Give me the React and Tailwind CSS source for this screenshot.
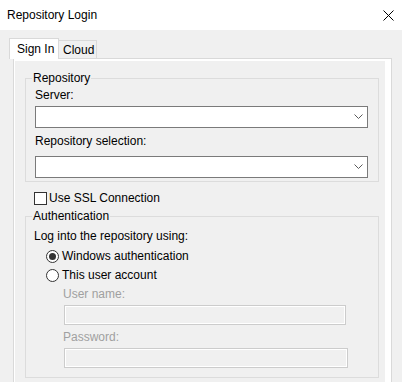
import React from "react";

// chevron of the combo boxes
function Chevron() {
  return (
    <svg width="9" height="6" viewBox="0 0 9 6" className="block">
      <path d="M0.5 0.5 L4.5 4.5 L8.5 0.5" fill="none" stroke="#5a5a5a" strokeWidth="1" />
    </svg>
  );
}

function Combo() {
  return (
    <div className="h-[22px] w-[333px] border border-[#7a7a7a] bg-white flex items-center justify-end pr-[4px]">
      <Chevron />
    </div>
  );
}

function GroupBox({ title, className, children }) {
  return (
    <div className={"relative ml-[10px] w-[354px] border border-[#dcdcdc] " + className}>
      <span className="absolute left-[6px] -top-[8px] px-[1px] bg-[#f0f0f0] leading-[15px] text-black">
        {title}
      </span>
      {children}
    </div>
  );
}

function Radio({ checked, label }) {
  return (
    <div className="flex items-center h-[15px] ml-[12px]">
      <span className="w-[13px] h-[13px] rounded-full border border-[#333333] bg-white flex items-center justify-center">
        {checked && <span className="w-[7px] h-[7px] rounded-full bg-[#333333]" />}
      </span>
      <span className="ml-[3px] leading-[15px]">{label}</span>
    </div>
  );
}

export default function App() {
  return (
    <div
      className="w-[402px] h-[382px] overflow-hidden bg-[#f0f0f0] text-[12px] text-black"
      style={{ fontFamily: '"Liberation Sans", Arial, sans-serif' }}
    >
      {/* title bar */}
      <div className="h-[30px] bg-white flex items-center justify-between pl-[7px] pr-[8px]">
        <span className="leading-[15px]">Repository Login</span>
        <svg width="11" height="11" viewBox="0 0 11 11" className="block">
          <path d="M0.5 0.5 L10.5 10.5 M10.5 0.5 L0.5 10.5" stroke="#000" strokeWidth="1" />
        </svg>
      </div>

      {/* tabs */}
      <div className="mt-[8px] ml-[9px] flex items-end h-[20px]">
        <div className="relative z-10 -mb-px h-[21px] w-[50px] bg-white border-l border-t border-r border-[#d9d9d9] pl-[7px] pt-[3px] leading-[15px]">
          Sign In
        </div>
        <div className="h-[18px] w-[38px] border-t border-r border-[#d9d9d9] pl-[4px] pt-[2px] leading-[15px]">
          Cloud
        </div>
      </div>

      {/* tab page */}
      <div className="ml-[13px] w-[379px] h-[330px] border-l border-t border-r border-[#d9d9d9] bg-white pl-[1px] pt-[2px] pr-[6px]">
        <div className="h-full bg-[#f0f0f0] pt-[17px]">
          <GroupBox title="Repository" className="pl-[9px] pt-[9px] pb-[3px]">
            <div className="leading-[15px]">Server:</div>
            <div className="mt-[3px]">
              <Combo />
            </div>
            <div className="mt-[6px] leading-[15px]">Repository selection:</div>
            <div className="mt-[7px]">
              <Combo />
            </div>
          </GroupBox>

          <div className="mt-[10px] ml-[19px] flex items-center h-[13px]">
            <span className="w-[13px] h-[13px] border border-[#333333] bg-white" />
            <span className="ml-[2px] leading-[15px]">Use SSL Connection</span>
          </div>

          <GroupBox title="Authentication" className="mt-[11px] pl-[8px] pt-[12px] pb-[9px]">
            <div className="leading-[15px]">Log into the repository using:</div>
            <div className="mt-[5px]">
              <Radio checked label="Windows authentication" />
            </div>
            <div className="mt-[4px]">
              <Radio label="This user account" />
            </div>
            <div className="mt-[4px] ml-[29px] leading-[15px] text-[#a0a0a0]">User name:</div>
            <div className="mt-[3px] ml-[30px] w-[282px] h-[20px] border border-[#cccccc] bg-[#f0f0f0] shadow-[inset_0_0_0_1px_#ffffff]" />
            <div className="mt-[5px] ml-[29px] leading-[15px] text-[#a0a0a0]">Password:</div>
            <div className="mt-[3px] ml-[30px] w-[284px] h-[20px] border border-[#cccccc] bg-[#f0f0f0] shadow-[inset_0_0_0_1px_#ffffff]" />
          </GroupBox>
        </div>
      </div>
    </div>
  );
}
